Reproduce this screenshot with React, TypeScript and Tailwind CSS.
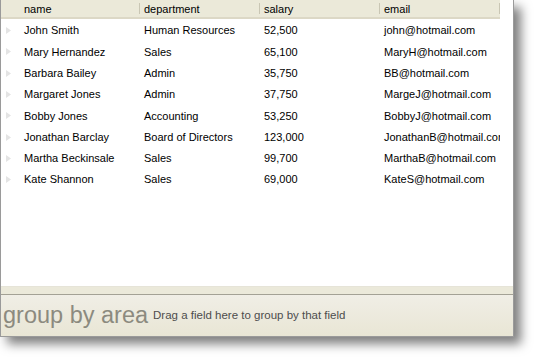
import React from 'react';

const columns = ['name', 'department', 'salary', 'email'];

const rows = [
  ['John Smith', 'Human Resources', '52,500', 'john@hotmail.com'],
  ['Mary Hernandez', 'Sales', '65,100', 'MaryH@hotmail.com'],
  ['Barbara Bailey', 'Admin', '35,750', 'BB@hotmail.com'],
  ['Margaret Jones', 'Admin', '37,750', 'MargeJ@hotmail.com'],
  ['Bobby Jones', 'Accounting', '53,250', 'BobbyJ@hotmail.com'],
  ['Jonathan Barclay', 'Board of Directors', '123,000', 'JonathanB@hotmail.com'],
  ['Martha Beckinsale', 'Sales', '99,700', 'MarthaB@hotmail.com'],
  ['Kate Shannon', 'Sales', '69,000', 'KateS@hotmail.com'],
];

function RowArrow() {
  return (
    <svg width="5" height="7" viewBox="0 0 5 7" className="ml-[5px]">
      <path d="M0 0 L5 3.5 L0 7 Z" fill="#e4e4e4" />
    </svg>
  );
}

export default function App() {
  return (
    <div className="w-[534px] h-[357px] bg-white overflow-hidden font-['Liberation_Sans',Arial,sans-serif] text-[11px] text-black">
      <div className="w-[514px] h-[337px] flex flex-col bg-white border-l border-r border-b border-[#9a9a9a] shadow-[7px_7px_10px_rgba(0,0,0,0.5)]">
        {/* header */}
        <div className="flex h-[19px] shrink-0">
          <div className="flex w-[499px] bg-[#ebe9d9] border-b-2 border-[#dcd8c6] pt-[1px]">
            <div className="w-[19px]" />
            {columns.map((c) => (
              <div key={c} className="w-[120px] flex items-center justify-between pl-[4px]">
                <span className="leading-none">{c}</span>
                <span className="w-px h-[11px] bg-[#c9c6b4] self-start mt-[2px]" />
              </div>
            ))}
          </div>
        </div>

        {/* body */}
        <div className="flex-1 flex flex-col pt-[1px]">
          {rows.map((r) => (
            <div key={r[0]} className="flex items-center h-[21.3px]">
              <div className="w-[19px] flex items-center">
                <RowArrow />
              </div>
              {r.map((cell, i) => (
                <div key={i} className="w-[120px] pl-[4px] whitespace-nowrap overflow-hidden">
                  {cell}
                </div>
              ))}
            </div>
          ))}
        </div>

        {/* group by area */}
        <div className="shrink-0 border-t border-[#e6e4d8] bg-[#ebe9da] h-[9px] border-b border-b-[#a3a195]" />
        <div className="shrink-0 h-[41px] flex items-center bg-gradient-to-b from-[#f0eee6] to-[#e9e6d5] pl-[2px]">
          <span className="text-[23.5px] text-[#8c8a7f] leading-none mr-[5px]">group by area</span>
          <span className="text-[11.5px] text-[#4d4d4d]">Drag a field here to group by that field</span>
        </div>
      </div>
    </div>
  );
}
